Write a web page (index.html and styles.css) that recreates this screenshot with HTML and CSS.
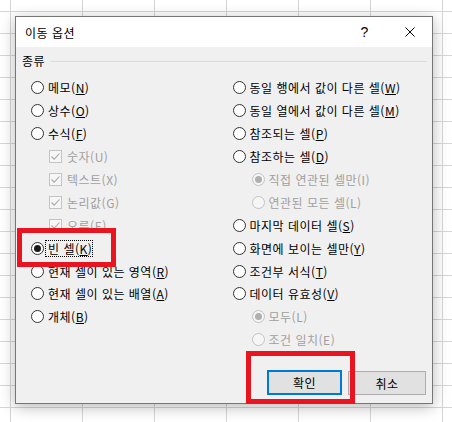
FILE: index.html
```html
<!DOCTYPE html>
<html lang="ko">
<head>
<meta charset="utf-8">
<title>이동 옵션</title>
<link rel="stylesheet" href="styles.css">
</head>
<body>
<div class="dialog">
  <div class="titlebar">
    <div class="title">이동 옵션</div>
    <div class="help">?</div>
    <div class="close">
      <svg width="10" height="10" viewBox="0 0 10 10"><path d="M0.5 0.5L9.5 9.5M9.5 0.5L0.5 9.5" stroke="#000" stroke-width="1" fill="none"/></svg>
    </div>
  </div>
  <div class="content">
    <div class="legend"><span>종류</span><span class="rule"></span></div>
    <div class="columns">
      <div class="col left">
        <div class="opt"><span class="radio"></span><span>메모(<u>N</u>)</span></div>
        <div class="opt"><span class="radio"></span><span>상수(<u>O</u>)</span></div>
        <div class="opt"><span class="radio"></span><span>수식(<u>F</u>)</span></div>
        <div class="opt sub disabled"><span class="check"><svg width="11" height="11" viewBox="0 0 11 11"><path d="M1.5 5.5L4.2 8.2L9.5 2.5" stroke="#a8a8a8" stroke-width="1.1" fill="none"/></svg></span><span>숫자(U)</span></div>
        <div class="opt sub disabled"><span class="check"><svg width="11" height="11" viewBox="0 0 11 11"><path d="M1.5 5.5L4.2 8.2L9.5 2.5" stroke="#a8a8a8" stroke-width="1.1" fill="none"/></svg></span><span>텍스트(X)</span></div>
        <div class="opt sub disabled"><span class="check"><svg width="11" height="11" viewBox="0 0 11 11"><path d="M1.5 5.5L4.2 8.2L9.5 2.5" stroke="#a8a8a8" stroke-width="1.1" fill="none"/></svg></span><span>논리값(G)</span></div>
        <div class="opt sub disabled"><span class="check"><svg width="11" height="11" viewBox="0 0 11 11"><path d="M1.5 5.5L4.2 8.2L9.5 2.5" stroke="#a8a8a8" stroke-width="1.1" fill="none"/></svg></span><span>오류(E)</span></div>
        <div class="opt"><span class="radio on"></span><span class="focus">빈 셀(<u>K</u>)</span></div>
        <div class="opt"><span class="radio"></span><span>현재 셀이 있는 영역(<u>R</u>)</span></div>
        <div class="opt"><span class="radio"></span><span>현재 셀이 있는 배열(<u>A</u>)</span></div>
        <div class="opt"><span class="radio"></span><span>개체(<u>B</u>)</span></div>
      </div>
      <div class="col right">
        <div class="opt"><span class="radio"></span><span>동일 행에서 값이 다른 셀(<u>W</u>)</span></div>
        <div class="opt"><span class="radio"></span><span>동일 열에서 값이 다른 셀(<u>M</u>)</span></div>
        <div class="opt"><span class="radio"></span><span>참조되는 셀(<u>P</u>)</span></div>
        <div class="opt"><span class="radio"></span><span>참조하는 셀(<u>D</u>)</span></div>
        <div class="opt rsub disabled"><span class="radio on"></span><span>직접 연관된 셀만(I)</span></div>
        <div class="opt rsub disabled"><span class="radio"></span><span>연관된 모든 셀(L)</span></div>
        <div class="opt"><span class="radio"></span><span>마지막 데이터 셀(<u>S</u>)</span></div>
        <div class="opt"><span class="radio"></span><span>화면에 보이는 셀만(<u>Y</u>)</span></div>
        <div class="opt"><span class="radio"></span><span>조건부 서식(<u>T</u>)</span></div>
        <div class="opt"><span class="radio"></span><span>데이터 유효성(<u>V</u>)</span></div>
        <div class="opt rsub disabled"><span class="radio on"></span><span>모두(L)</span></div>
        <div class="opt rsub disabled"><span class="radio"></span><span>조건 일치(E)</span></div>
      </div>
    </div>
    <div class="buttons">
      <div class="btn default">확인</div>
      <div class="btn cancel">취소</div>
    </div>
  </div>
</div>
<div class="mark mark-empty"></div>
<div class="mark mark-ok"></div>
</body>
</html>
```

FILE: styles.css
```css
html, body {
  margin: 0;
  padding: 0;
}
body {
  width: 452px;
  height: 422px;
  overflow: hidden;
  position: relative;
  background-color: #ffffff;
  background-image:
    linear-gradient(to right, #d6d6d6 1px, transparent 1px),
    linear-gradient(to bottom, #d6d6d6 1px, transparent 1px);
  background-size: 72px 22px;
  background-position: 10px 11px;
  font-family: "Noto Sans CJK KR", "Noto Sans", sans-serif;
  font-size: 12px;
  letter-spacing: 0.5px;
  color: #000;
}
.dialog {
  box-sizing: border-box;
  margin: 16px 0 0 15px;
  width: 418px;
  height: 388px;
  border: 1px solid #767676;
  background: #f0f0f0;
  display: flex;
  flex-direction: column;
  box-shadow: 0 3px 14px rgba(0, 0, 0, 0.28);
}
.titlebar {
  height: 30px;
  background: #ffffff;
  display: flex;
  align-items: center;
  flex: none;
}
.title {
  flex: 1;
  padding-left: 9px;
  line-height: 15px;
}
.help {
  width: 47px;
  text-align: center;
  font-family: "Liberation Sans", sans-serif;
  font-size: 14px;
  letter-spacing: 0;
  line-height: 30px;
}
.close {
  width: 44px;
  height: 30px;
  display: flex;
  align-items: center;
  justify-content: center;
}
.close svg {
  display: block;
}
.content {
  flex: 1;
  padding: 7px 5px 0 6px;
  display: flex;
  flex-direction: column;
}
.legend {
  display: flex;
  align-items: center;
  height: 14px;
  line-height: 14px;
}
.rule {
  flex: 1;
  height: 1px;
  background: #dcdcdc;
  margin-left: 5px;
  margin-right: 0;
}
.columns {
  display: flex;
  margin-top: 8.5px;
  margin-left: 9px;
}
.col.left {
  width: 201.5px;
}
.col.right {
  flex: 1;
}
.opt {
  display: flex;
  align-items: center;
  height: 22.9px;
  line-height: 15px;
  white-space: nowrap;
}
.opt u {
  text-decoration: underline;
  text-underline-offset: 1px;
}
.radio {
  box-sizing: border-box;
  width: 13px;
  height: 13px;
  border: 1px solid #333333;
  border-radius: 50%;
  background: #ffffff;
  flex: none;
  margin-right: 4px;
  display: flex;
  align-items: center;
  justify-content: center;
}
.radio.on::after {
  content: "";
  width: 7px;
  height: 7px;
  border-radius: 50%;
  background: #1a1a1a;
}
.check {
  box-sizing: border-box;
  width: 13px;
  height: 13px;
  border: 1px solid #c4c4c4;
  background: #f6f6f6;
  flex: none;
  margin-right: 5px;
  display: flex;
  align-items: center;
  justify-content: center;
}
.check svg {
  display: block;
}
.sub {
  padding-left: 18px;
}
.rsub {
  padding-left: 19px;
}
.disabled {
  color: #a0a0a0;
}
.disabled .radio {
  border-color: #c2c2c2;
  background: #f6f6f6;
}
.disabled .radio.on::after {
  background: #b0b0b0;
}
.focus {
  position: relative;
}
.focus::after {
  content: "";
  position: absolute;
  left: -3px;
  right: -1px;
  top: -1px;
  bottom: -1px;
  border: 1px dotted #000;
}
.buttons {
  display: flex;
  justify-content: flex-end;
  margin-top: auto;
  margin-bottom: 8px;
  padding-right: 1px;
  gap: 6px;
}
.btn {
  box-sizing: border-box;
  height: 25px;
  background: #e1e1e1;
  display: flex;
  align-items: center;
  justify-content: center;
  line-height: 15px;
}
.btn.default {
  width: 75px;
  border: 2px solid #0078d7;
}
.btn.cancel {
  width: 78px;
  height: 24px;
  margin-top: 1px;
  border: 1px solid #adadad;
}
.mark {
  position: absolute;
  box-sizing: border-box;
  border: 5px solid #e8141f;
}
.mark-empty {
  left: 17px;
  top: 228px;
  width: 99px;
  height: 39px;
}
.mark-ok {
  left: 246px;
  top: 351px;
  width: 109px;
  height: 53px;
}
```
